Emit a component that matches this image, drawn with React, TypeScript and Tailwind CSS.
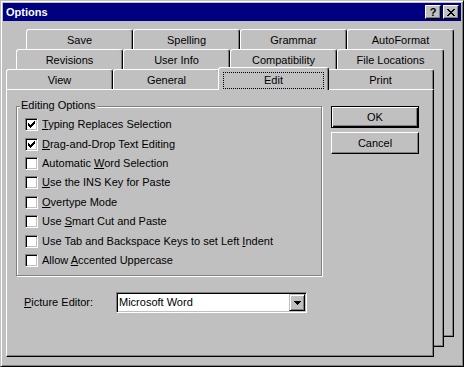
import React from 'react';

type Opt = { before: string; hot: string; after: string; checked?: boolean };

const backTabs = ['Save', 'Spelling', 'Grammar', 'AutoFormat'];
const midTabs = ['Revisions', 'User Info', 'Compatibility', 'File Locations'];

const options: Opt[] = [
  { before: '', hot: 'T', after: 'yping Replaces Selection', checked: true },
  { before: '', hot: 'D', after: 'rag-and-Drop Text Editing', checked: true },
  { before: 'Automatic ', hot: 'W', after: 'ord Selection' },
  { before: '', hot: 'U', after: 'se the INS Key for Paste' },
  { before: '', hot: 'O', after: 'vertype Mode' },
  { before: 'Use ', hot: 'S', after: 'mart Cut and Paste' },
  { before: 'Use Tab and Backspace Keys to set Left ', hot: 'I', after: 'ndent' },
  { before: 'Allow ', hot: 'A', after: 'ccented Uppercase' },
];

const Tab: React.FC<{ label: string; className?: string }> = ({ label, className = '' }) => (
  <div
    className={`flex h-[20px] w-[107px] shrink-0 items-center justify-center rounded-t-[3px] border-t border-l border-r border-t-white border-l-white border-r-black bg-[#c0c0c0] pt-[2px] shadow-[inset_-1px_0_#808080] ${className}`}
  >
    {label}
  </div>
);

const TitleButton: React.FC<{ children: React.ReactNode }> = ({ children }) => (
  <div className="flex h-[14px] w-[16px] items-center justify-center border border-t-white border-l-white border-r-black border-b-black bg-[#c0c0c0] text-black shadow-[inset_-1px_-1px_#808080]">
    {children}
  </div>
);

const Check: React.FC<{ checked?: boolean }> = ({ checked }) => (
  <span className="flex h-[13px] w-[13px] shrink-0 items-center justify-center border border-t-[#808080] border-l-[#808080] border-r-white border-b-white bg-white shadow-[inset_1px_1px_#000,inset_-1px_-1px_#c0c0c0]">
    {checked && (
      <svg width="7" height="7" viewBox="0 0 7 7" shapeRendering="crispEdges">
        <path
          fill="#000"
          d="M6 0h1v1h-1z M5 1h2v1h-2z M0 2h1v1h-1z M4 2h3v1h-3z M0 3h2v1h-2z M3 3h3v1h-3z M0 4h5v1h-5z M1 5h3v1h-3z M2 6h1v1h-1z"
        />
      </svg>
    )}
  </span>
);

export default function App() {
  return (
    <div className="flex h-[367px] w-[464px] flex-col border border-t-[#c0c0c0] border-l-[#c0c0c0] border-r-black border-b-black bg-[#c0c0c0] p-[2px] font-['Liberation_Sans',Arial,sans-serif] text-[11px] leading-[13px] text-black shadow-[inset_1px_1px_#fff,inset_-1px_-1px_#808080]">
      {/* Title bar */}
      <div className="flex h-[18px] shrink-0 items-center bg-[#000080] pl-[3px] pr-[2px]">
        <span className="font-bold text-white">Options</span>
        <div className="ml-auto flex gap-[2px]">
          <TitleButton>
            <span className="font-bold leading-[11px]">?</span>
          </TitleButton>
          <TitleButton>
            <svg width="8" height="7" viewBox="0 0 8 7" shapeRendering="crispEdges">
              <path
                fill="#000"
                d="M0 0h2v1h-2z M6 0h2v1h-2z M1 1h2v1h-2z M5 1h2v1h-2z M2 2h4v1h-4z M3 3h2v1h-2z M2 4h4v1h-4z M1 5h2v1h-2z M5 5h2v1h-2z M0 6h2v1h-2z M6 6h2v1h-2z"
              />
            </svg>
          </TitleButton>
        </div>
      </div>

      {/* Stacked property pages */}
      <div className="ml-[3px] mt-[8px] grid h-[328px] w-[448px]">
        {/* Back page */}
        <div className="col-start-1 row-start-1 mb-[20px] ml-[20px] flex flex-col">
          <div className="flex">
            {backTabs.map((t) => (
              <Tab key={t} label={t} />
            ))}
          </div>
          <div className="flex-1 border-r border-b border-black bg-[#c0c0c0] shadow-[inset_-1px_-1px_#808080]" />
        </div>

        {/* Middle page */}
        <div className="col-start-1 row-start-1 mx-[10px] mt-[20px] mb-[10px] flex flex-col">
          <div className="flex">
            {midTabs.map((t) => (
              <Tab key={t} label={t} />
            ))}
          </div>
          <div className="flex-1 border-r border-b border-black bg-[#c0c0c0] shadow-[inset_-1px_-1px_#808080]" />
        </div>

        {/* Front page */}
        <div className="col-start-1 row-start-1 mr-[20px] mt-[38px] flex flex-col">
          <div className="flex h-[22px] items-start">
            <Tab label="View" className="mt-[2px]" />
            <Tab label="General" className="mt-[2px]" />
            <div className="relative z-10 -mx-[2px] flex h-[23px] w-[111px] shrink-0 flex-col items-center rounded-t-[3px] border-t border-l border-r border-t-white border-l-white border-r-black bg-[#c0c0c0] shadow-[inset_-1px_0_#808080]">
              <span className="mt-[4px] flex h-[17px] w-[101px] items-center justify-center border border-dotted border-black">
                Edit
              </span>
            </div>
            <Tab label="Print" className="mt-[2px]" />
          </div>

          <div className="flex flex-1 flex-col border border-t-white border-l-white border-r-black border-b-black bg-[#c0c0c0] px-[9px] pt-[16px] shadow-[inset_-1px_-1px_#808080]">
            <div className="flex items-start">
              {/* Editing Options group */}
              <div className="relative h-[170px] w-[306px] border border-[#808080] shadow-[inset_1px_1px_#fff,1px_1px_#fff]">
                <span className="absolute -top-[8px] left-[3px] bg-[#c0c0c0] px-[1px]">Editing Options</span>
                <div className="flex flex-col pl-[8px] pt-[8px]">
                  {options.map((o) => (
                    <div key={o.hot + o.after} className="flex h-[19.43px] items-center gap-[4px]">
                      <Check checked={o.checked} />
                      <span className="whitespace-pre">
                        {o.before}
                        <u>{o.hot}</u>
                        {o.after}
                      </span>
                    </div>
                  ))}
                </div>
              </div>

              {/* Buttons */}
              <div className="ml-[9px] flex flex-col gap-[4px]">
                <button className="flex h-[22px] w-[88px] items-center justify-center border border-black bg-[#c0c0c0] shadow-[inset_1px_1px_#fff,inset_-1px_-1px_#000,inset_-2px_-2px_#808080]">
                  OK
                </button>
                <button className="flex h-[22px] w-[88px] items-center justify-center border border-t-white border-l-white border-r-black border-b-black bg-[#c0c0c0] shadow-[inset_-1px_-1px_#808080]">
                  Cancel
                </button>
              </div>
            </div>

            {/* Picture editor */}
            <div className="mt-[16px] flex items-center pl-[8px]">
              <span className="w-[92px]">
                <u>P</u>icture Editor:
              </span>
              <div className="flex h-[21px] w-[191px] border border-t-[#808080] border-l-[#808080] border-r-white border-b-white bg-white p-[1px] shadow-[inset_1px_1px_#000,inset_-1px_-1px_#c0c0c0]">
                <span className="flex flex-1 items-center pl-[1px]">Microsoft Word</span>
                <div className="flex w-[16px] items-center justify-center border border-t-[#c0c0c0] border-l-[#c0c0c0] border-r-black border-b-black bg-[#c0c0c0] shadow-[inset_1px_1px_#fff,inset_-1px_-1px_#808080]">
                  <svg width="7" height="4" viewBox="0 0 7 4" shapeRendering="crispEdges">
                    <path fill="#000" d="M0 0h7v1h-7z M1 1h5v1h-5z M2 2h3v1h-3z M3 3h1v1h-1z" />
                  </svg>
                </div>
              </div>
            </div>
          </div>
        </div>
      </div>
    </div>
  );
}
